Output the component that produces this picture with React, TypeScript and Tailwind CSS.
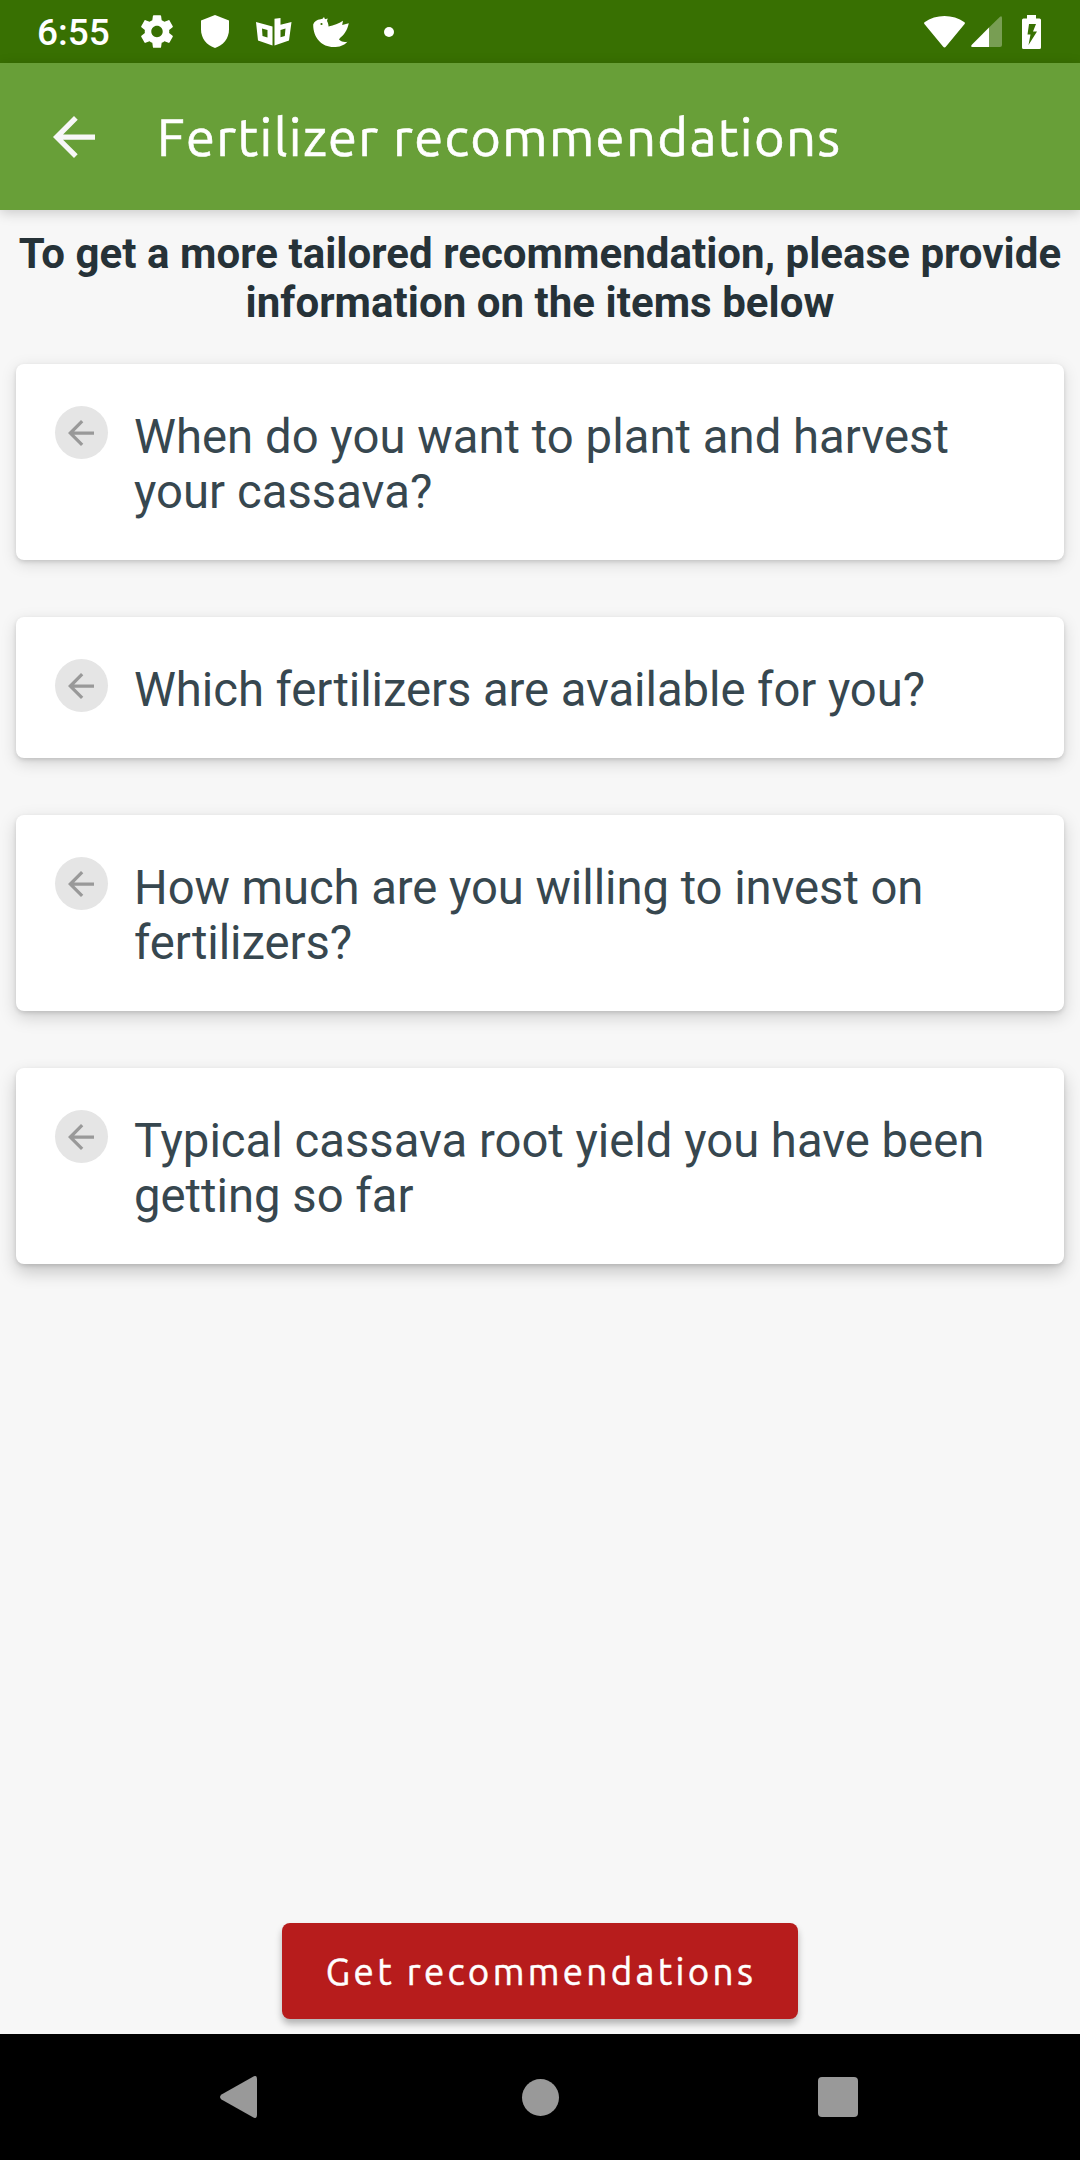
import React from "react";

type Question = { text: string; style: string };

const questions: Question[] = [
  {
    text: "When do you want to plant and harvest your cassava?",
    style:
      "h-[196px] tracking-[0.03px] shadow-[0_4px_16px_rgba(0,0,0,0.13),0_2px_4px_rgba(0,0,0,0.12)]",
  },
  {
    text: "Which fertilizers are available for you?",
    style:
      "h-[141px] tracking-[-0.07px] shadow-[0_5px_16px_rgba(0,0,0,0.15),0_2px_4px_rgba(0,0,0,0.12)]",
  },
  {
    text: "How much are you willing to invest on fertilizers?",
    style:
      "h-[196px] tracking-[-0.07px] shadow-[0_6px_17px_rgba(0,0,0,0.17),0_2px_4px_rgba(0,0,0,0.12)]",
  },
  {
    text: "Typical cassava root yield you have been getting so far",
    style:
      "h-[196px] tracking-[-0.01px] shadow-[0_8px_18px_rgba(0,0,0,0.2),0_2px_4px_rgba(0,0,0,0.12)]",
  },
];

function BackArrow({ className }: { className: string }) {
  return (
    <svg viewBox="4 4 16 16" className={className} fill="currentColor">
      <path d="M20 11H7.83l5.59-5.59L12 4l-8 8 8 8 1.41-1.41L7.83 13H20v-2z" />
    </svg>
  );
}

function StatusBar() {
  return (
    <div className="flex h-[63px] shrink-0 items-center bg-[#387002] pr-[39px] pl-[37px] text-white">
      <span className="w-[104px] pt-[3px] font-['Roboto',sans-serif] text-[37px] leading-[44px] font-medium">6:55</span>
      <svg viewBox="2.2 2 19.6 20" className="h-[33px] w-[32px]" fill="currentColor">
        <path d="M19.43 12.98c.04-.32.07-.64.07-.98s-.03-.66-.07-.98l2.11-1.65c.19-.15.24-.42.12-.64l-2-3.46c-.12-.22-.39-.3-.61-.22l-2.49 1c-.52-.4-1.08-.73-1.69-.98l-.38-2.65C14.46 2.18 14.25 2 14 2h-4c-.25 0-.46.18-.49.42l-.38 2.65c-.61.25-1.17.59-1.69.98l-2.49-1c-.23-.09-.49 0-.61.22l-2 3.46c-.13.22-.07.49.12.64l2.11 1.65c-.04.32-.07.65-.07.98s.03.66.07.98l-2.11 1.65c-.19.15-.24.42-.12.64l2 3.46c.12.22.39.3.61.22l2.49-1c.52.4 1.08.73 1.69.98l.38 2.65c.03.24.24.42.49.42h4c.25 0 .46-.18.49-.42l.38-2.65c.61-.25 1.17-.59 1.69-.98l2.49 1c.23.09.49 0 .61-.22l2-3.46c.12-.22.07-.49-.12-.64l-2.11-1.65zM12 15.5c-1.93 0-3.5-1.57-3.5-3.5s1.57-3.5 3.5-3.5 3.5 1.57 3.5 3.5-1.57 3.5-3.5 3.5z" />
      </svg>
      <svg viewBox="0 0 28 33" className="ml-[28px] h-[33px] w-[28px]" fill="currentColor">
        <path d="M14 0 28 5.5V14.500C28 23.500 22 30.500 14 33 6 30.500 0 23.500 0 14.500V5.500Z" />
      </svg>
      <svg viewBox="0 0 36 28" className="ml-[27px] h-[28px] w-[36px]" fill="currentColor" fillRule="evenodd">
        <path d="M0 4 16.500 8.500V27.500L2 22.500ZM6 10.500 11.500 12V19.500L6.500 18ZM18.500.7 24.500 0V6.800L35.500 4 33 22.500 18.500 27.500ZM24.500 12 29.500 10.500 28.800 18 24.500 19.300Z" />
      </svg>
      <svg viewBox="0 0 36 30" className="ml-[21px] h-[30px] w-[36px]" fill="currentColor">
        <path d="M.2 7.500C1 4.500 4 2.700 7.500 2.300L9.500 1.800 11 0 12 2.300 14.700 1.500 14 4C15 5.500 15.500 7.700 15.500 9.500 21 8 25.500 7 30 3.800L29.200 8 35.800 6.300C34 14 31 18 27 21L26 22.500C29 25 31 25.200 34.500 24.700 31 28.500 26.500 30 20.500 30 9 30 0 21 .2 7.500Z" />
        <circle cx="8.500" cy="7" r="1.100" fill="#387002" />
      </svg>
      <div className="ml-[35px] size-[10px] rounded-full bg-white" />
      <svg viewBox="0 0 41 32" className="ml-auto h-[32px] w-[41px]" fill="currentColor">
        <path d="M.5 6.200C12-2 29-2 40.500 6.200Q41.300 7 40.600 8L22 30.500Q20.500 32.500 19 30.500L.4 8Q-.3 7 .5 6.200Z" />
      </svg>
      <svg viewBox="0 0 31 31" className="ml-[6px] h-[31px] w-[31px]" fill="currentColor">
        <path d="M29 .7Q31-.7 31 2V29Q31 31 29 31H18V11.500Z" opacity=".32" />
        <path d="M18 11.500V31H1.500Q-.7 31 .6 29Z" />
      </svg>
      <svg viewBox="0 0 19 34" className="ml-[20px] h-[34px] w-[19px]" fill="currentColor" fillRule="evenodd">
        <path d="M5 0H14V3.500H17.500Q19 3.500 19 5V32.500Q19 34 17.500 34H1.500Q0 34 0 32.500V5Q0 3.500 1.500 3.500H5ZM7 9 5.500 19.500H8.500L6.500 30 15 16.500H11L14 9Z" />
      </svg>
    </div>
  );
}

function QuestionCard({ text, style }: Question) {
  return (
    <div className={`flex items-start rounded-[8px] bg-white pr-10 pl-[39px] ${style}`}>
      <div className="mt-[42px] flex size-[53px] shrink-0 items-center justify-center rounded-full bg-[#e5e5e5] pr-px text-[#999999]">
        <BackArrow className="size-[26px]" />
      </div>
      <p className="mt-[46px] ml-[26px] text-[47.25px] leading-[55px] text-[#37474f]">{text}</p>
    </div>
  );
}

export default function App() {
  return (
    <div className="flex h-[2160px] w-[1080px] flex-col overflow-hidden bg-[#f7f7f7] font-['Roboto',sans-serif]">
      <StatusBar />
      <header className="z-10 flex h-[147px] shrink-0 items-center bg-[#689f38] pl-[53px] shadow-[0_3px_12px_rgba(0,0,0,0.18)]">
        <BackArrow className="size-[42px] text-[#f7f7f7]" />
        <h1 className="ml-[62px] font-['Ubuntu','Noto_Sans',sans-serif] text-[52.5px] leading-[60px] tracking-[1.37px] whitespace-nowrap text-white [-webkit-text-stroke:0.6px_white]">
          Fertilizer recommendations
        </h1>
      </header>
      <main className="flex grow flex-col items-center">
        <h2 className="mt-[19px] text-center text-[42px] leading-[49px] font-bold tracking-[0.04px] text-[#263238]">
          To get a more tailored recommendation, please provide
          <br />
          information on the items below
        </h2>
        <div className="mt-[37px] flex w-[1048px] flex-col gap-[57px]">
          {questions.map((q) => (
            <QuestionCard key={q.text} {...q} />
          ))}
        </div>
        <button className="mt-auto mb-[15px] h-[96px] w-[516px] rounded-[8px] bg-[#b71c1c] pt-[2px] pl-[2px] font-['Ubuntu','Noto_Sans',sans-serif] text-[36.75px] tracking-[3.33px] whitespace-nowrap text-white shadow-[0_5px_7px_rgba(0,0,0,0.28)] [-webkit-text-stroke:0.5px_white]">
          Get recommendations
        </button>
      </main>
      <nav className="flex h-[126px] shrink-0 items-center bg-black pl-[220px] text-[#999999]">
        <svg viewBox="0 0 37 42" className="h-[42px] w-[37px]" fill="currentColor">
          <path d="M33 .7Q37-1.500 37 3V39Q37 43.500 33 41.300L1.500 23.500Q-1.500 21 1.500 18.500Z" />
        </svg>
        <div className="ml-[265px] size-[37px] rounded-full bg-[#999999]" />
        <div className="ml-[259px] size-[40px] rounded-[4px] bg-[#999999]" />
      </nav>
    </div>
  );
}
